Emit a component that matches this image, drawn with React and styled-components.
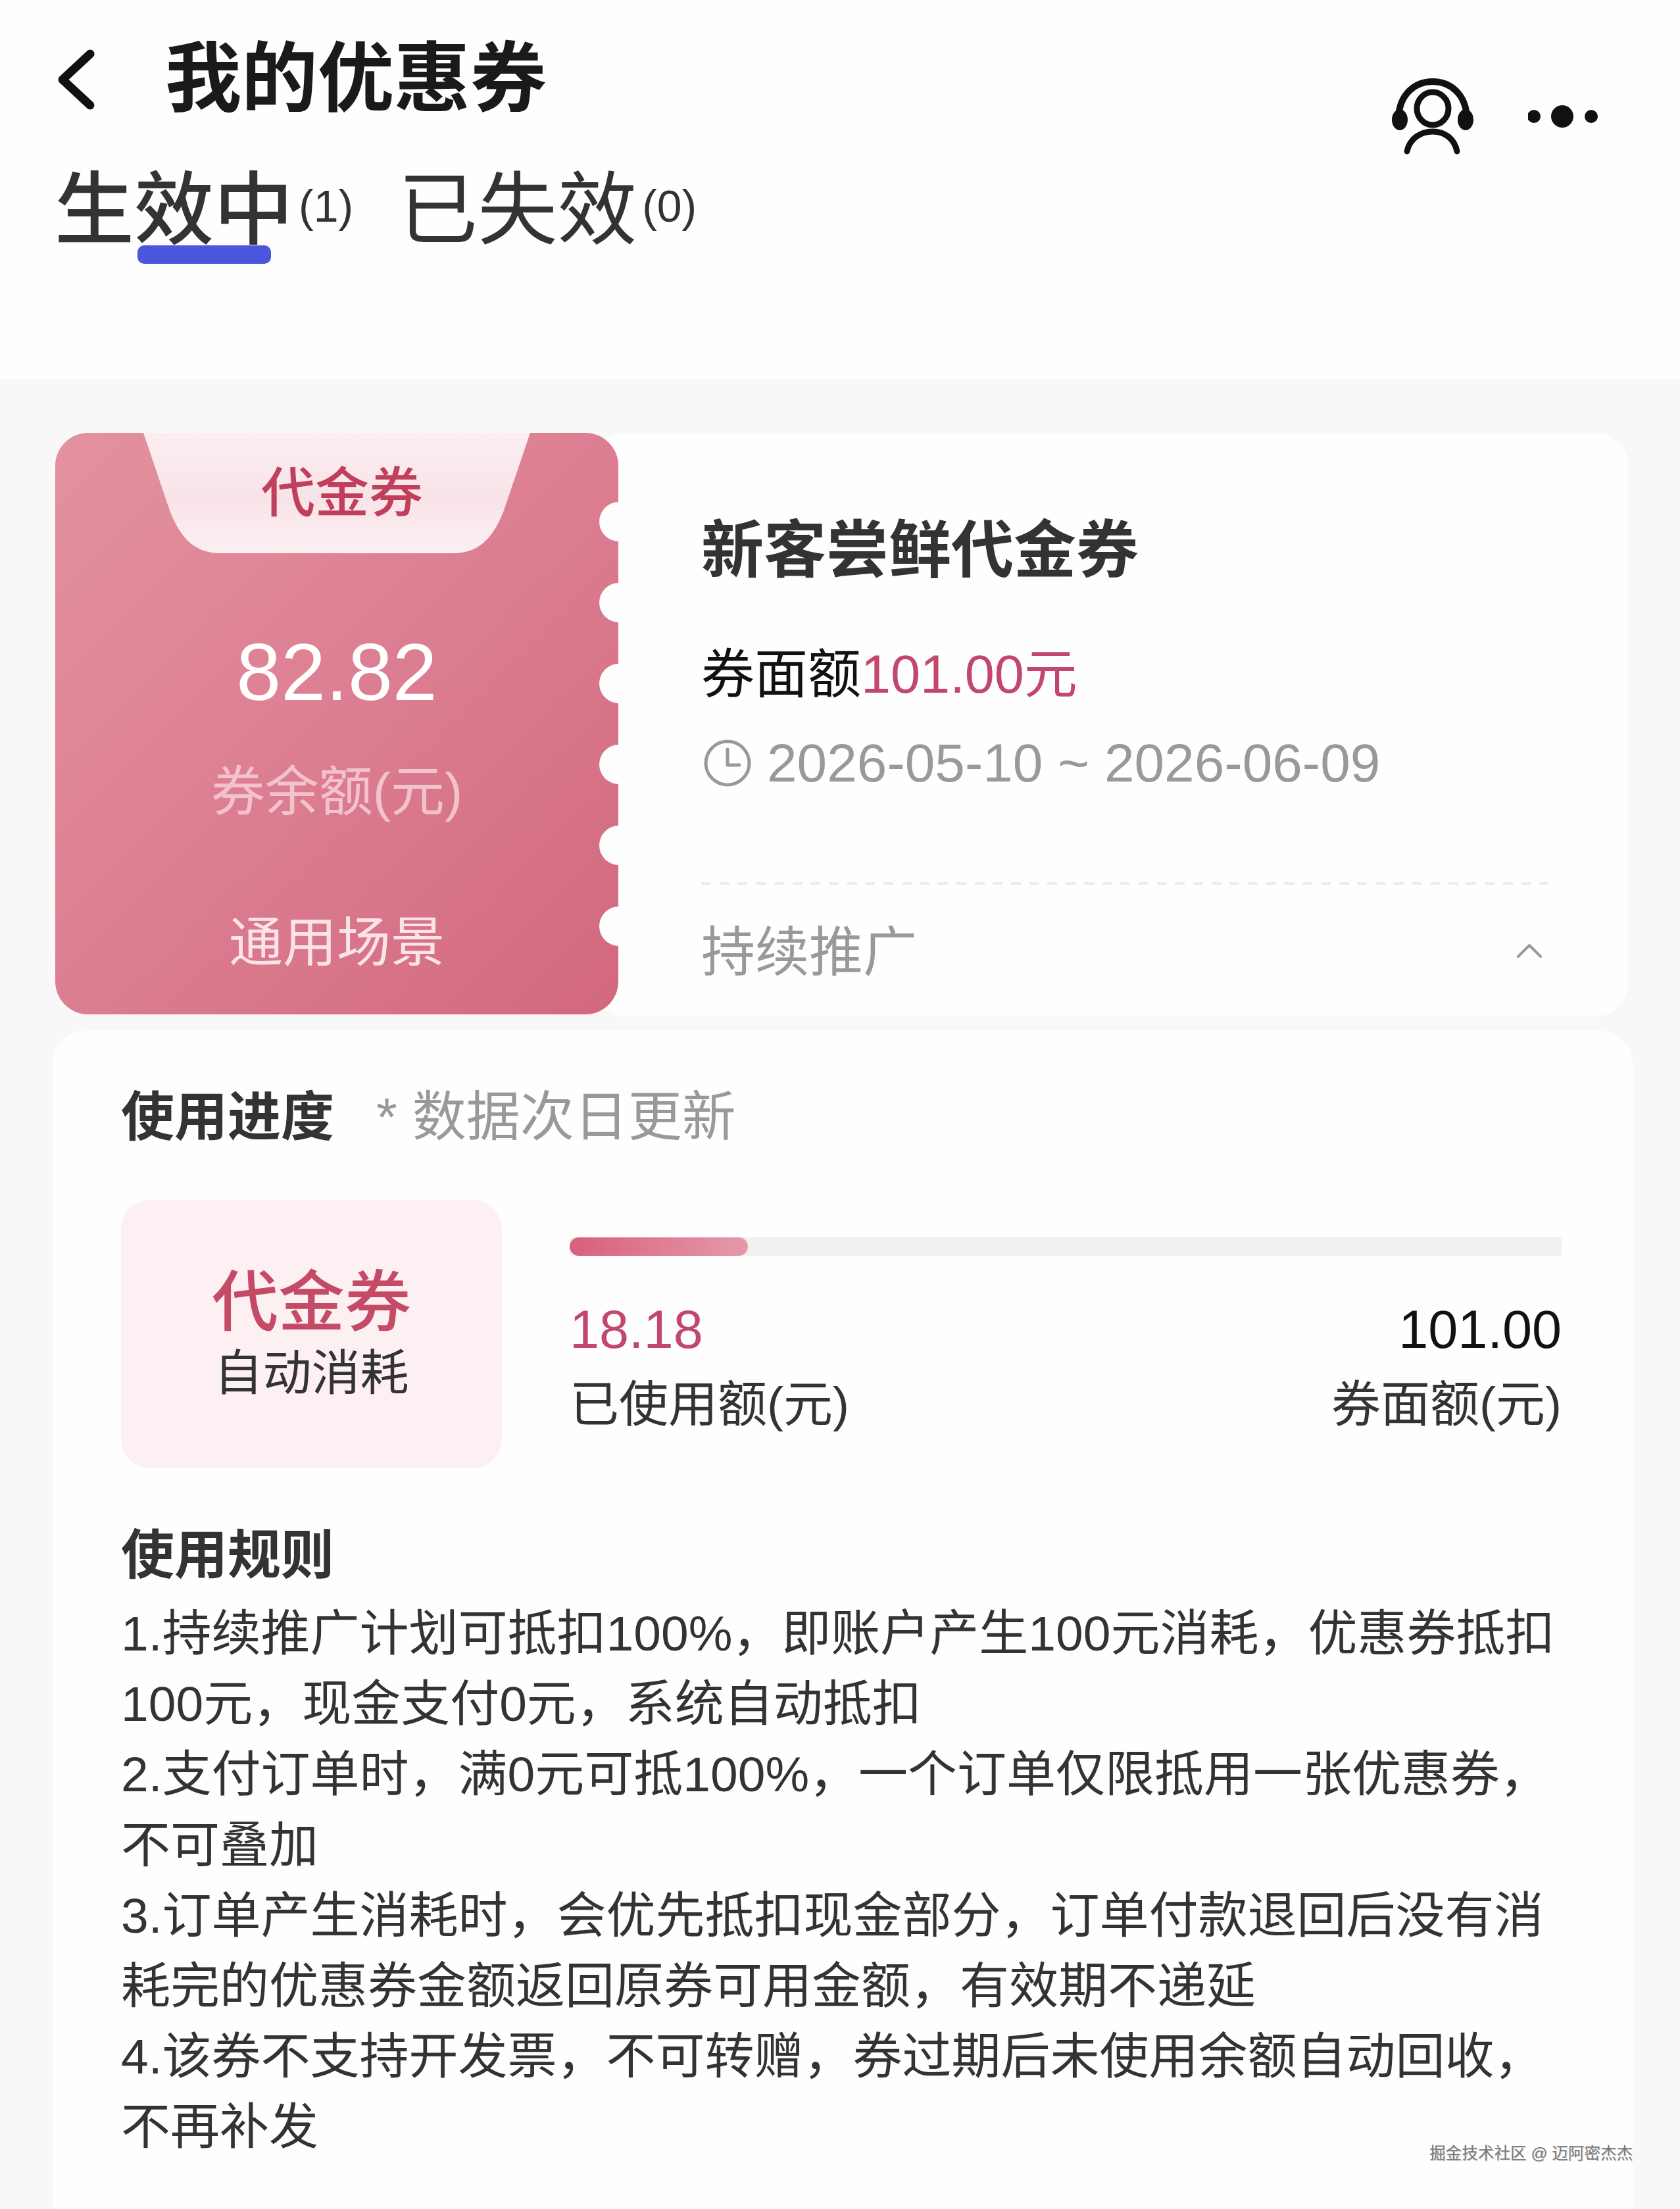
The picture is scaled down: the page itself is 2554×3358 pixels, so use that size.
import React from "react";
import styled, { createGlobalStyle } from "styled-components";

const Global = createGlobalStyle`
  html, body { margin: 0; padding: 0; background: #f8f8f8; }
  body { font-family: "Liberation Sans", "Noto Sans CJK SC", sans-serif; color: #333; }
`;

const Page = styled.div`
  position: relative;
  width: 2554px;
  height: 3358px;
  overflow: hidden;
  background: #f8f8f8;
`;

const TopBar = styled.header`
  height: 576px;
  box-sizing: border-box;
  background: #fefefe;
  padding: 55px 125px 0 83px;
`;

const NavRow = styled.div`
  display: flex;
  align-items: flex-start;
  height: 204px;
`;

const BackButton = styled.svg`
  width: 56px;
  height: 92px;
  margin: 20px 0 0 5px;
  flex: none;
`;

const PageTitle = styled.h1`
  margin: 7px 0 0 107px;
  font-size: 116px;
  line-height: 116px;
  font-weight: 700;
  color: #1a1a1a;
  flex: 1;
`;

const NavActions = styled.div`
  display: flex;
  align-items: center;
  gap: 83px;
  margin-top: 63px;
`;

const Tabs = styled.nav`
  display: flex;
  align-items: flex-start;
  gap: 68px;
`;

const Tab = styled.div`
  position: relative;
  display: flex;
  align-items: flex-start;
  font-size: 121px;
  line-height: 120px;
  font-weight: ${(p) => (p.$active ? 500 : 400)};
  color: #333;
`;

const TabCount = styled.span`
  font-size: 68px;
  line-height: 68px;
  font-weight: 400;
  margin: 20px 0 0 8px;
`;

const TabMark = styled.span`
  position: absolute;
  left: 126px;
  top: 114px;
  width: 203px;
  height: 28px;
  border-radius: 10px;
  background: #4a56dc;
`;

const CouponRow = styled.section`
  display: flex;
  margin: 82px 79px 0 84px;
  height: 887px;
`;

const Stub = styled.div`
  position: relative;
  z-index: 1;
  flex: none;
  width: 856px;
  height: 884px;
  border-radius: 50px;
  background: linear-gradient(135deg, #e3929f 0%, #dd8093 45%, #d2687e 100%);
  display: flex;
  flex-direction: column;
  align-items: center;
`;

const StubTab = styled.div`
  width: 588px;
  height: 183px;
  flex: none;
  display: flex;
  align-items: center;
  justify-content: center;
  padding-left: 16px;
  box-sizing: border-box;
  background: linear-gradient(180deg, #fbeef1 0%, #f9e3e8 55%, #fbf0f3 100%);
  clip-path: path("M0 0 L40 118 C58 165 82 183 118 183 L470 183 C506 183 530 165 548 118 L588 0 Z");
  font-size: 82px;
  line-height: 82px;
  font-weight: 500;
  color: #c0405c;
`;

const StubAmount = styled.div`
  margin-top: 121px;
  font-size: 122px;
  line-height: 120px;
  color: #fff;
`;

const StubLabel = styled.div`
  margin-top: ${(p) => p.$gap}px;
  font-size: 82px;
  line-height: 80px;
  color: ${(p) => p.$color};
`;

const Notches = styled.div`
  position: absolute;
  left: 827px;
  top: 105px;
  display: flex;
  flex-direction: column;
  gap: 63px;
`;

const Notch = styled.span`
  display: block;
  width: 60px;
  height: 60px;
  border-radius: 50%;
  background: #fdfdfd;
`;

const CouponBody = styled.div`
  flex: 1;
  margin-left: -40px;
  box-sizing: border-box;
  padding: 132px 121px 0 166px;
  border-radius: 50px;
  background: #fefefe;
`;

const CouponName = styled.h2`
  margin: 0;
  font-size: 95px;
  line-height: 95px;
  font-weight: 700;
  color: #333;
`;

const FaceValue = styled.div`
  margin-top: 100px;
  font-size: 81px;
  line-height: 80px;
  color: #111;
`;

const Accent = styled.span`
  color: #c2476b;
`;

const DateRow = styled.div`
  display: flex;
  align-items: center;
  gap: 22px;
  margin-top: 55px;
  font-size: 82px;
  line-height: 80px;
  color: #999;
  white-space: nowrap;
`;

const ClockIcon = styled.svg`
  width: 78px;
  height: 78px;
  flex: none;
`;

const Dashed = styled.div`
  margin-top: 141px;
  height: 4px;
  background: repeating-linear-gradient(90deg, #ededed 0 15px, transparent 15px 27.7px);
`;

const ScopeRow = styled.div`
  display: flex;
  align-items: center;
  justify-content: space-between;
  margin-top: 63px;
  font-size: 82px;
  line-height: 80px;
  color: #999;
`;

const Caret = styled.svg`
  width: 40px;
  height: 24px;
  margin: 0 9px 6px 0;
`;

const Panel = styled.section`
  margin: 22px 72px 0 80px;
  padding: 91px 108px 0 104px;
  height: 1900px;
  box-sizing: border-box;
  border-radius: 50px;
  background: #fefefe;
`;

const PanelHead = styled.div`
  display: flex;
  align-items: center;
  font-size: 81px;
  line-height: 80px;
`;

const PanelTitle = styled.h3`
  margin: 0;
  font-size: inherit;
  line-height: inherit;
  font-weight: 700;
  color: #333;
`;

const PanelNote = styled.span`
  margin-left: 64px;
  font-size: 82px;
  color: #999;
`;

const Progress = styled.div`
  display: flex;
  margin-top: 86px;
`;

const KindTile = styled.div`
  flex: none;
  width: 579px;
  height: 408px;
  box-sizing: border-box;
  padding-top: 106px;
  border-radius: 44px;
  background: #fcf0f2;
  display: flex;
  flex-direction: column;
  align-items: center;
`;

const KindName = styled.div`
  font-size: 101px;
  line-height: 100px;
  font-weight: 500;
  color: #c54a66;
`;

const KindSub = styled.div`
  margin-top: 22px;
  font-size: 74px;
  line-height: 72px;
  color: #333;
`;

const Usage = styled.div`
  flex: 1;
  margin-left: 103px;
  padding-top: 57px;
`;

const Track = styled.div`
  height: 28px;
  background: #f0f0f0;
  border-radius: 4px;
  overflow: hidden;
`;

const Fill = styled.div`
  height: 100%;
  border-radius: 14px;
  background: linear-gradient(90deg, #d8607b, #e599ab);
`;

const UsageFigures = styled.div`
  display: flex;
  justify-content: space-between;
  margin-top: 72px;
`;

const Figure = styled.div`
  text-align: ${(p) => (p.$right ? "right" : "left")};
`;

const FigureValue = styled.div`
  font-size: 81px;
  line-height: 80px;
  color: ${(p) => p.$color};
`;

const FigureLabel = styled.div`
  margin-top: 37px;
  font-size: 75px;
  line-height: 74px;
  color: #333;
`;

const RulesTitle = styled.h3`
  margin: 92px 0 0;
  font-size: 81px;
  line-height: 80px;
  font-weight: 700;
  color: #333;
`;

const Rules = styled.div`
  margin-top: 26px;
  font-size: 75px;
  line-height: 107.2px;
  color: #333;
`;

const RuleLine = styled.div`
  width: fit-content;
  white-space: nowrap;
`;

const Watermark = styled.div`
  position: absolute;
  left: 2173px;
  top: 3260px;
  font-size: 24.6px;
  line-height: 28px;
  color: #7a7a7a;
  text-shadow: 1px 1px 0 #d0d0d0;
  white-space: nowrap;
`;

const ruleLines = [
  "1.持续推广计划可抵扣100%，即账户产生100元消耗，优惠券抵扣",
  "100元，现金支付0元，系统自动抵扣",
  "2.支付订单时，满0元可抵100%，一个订单仅限抵用一张优惠券，",
  "不可叠加",
  "3.订单产生消耗时，会优先抵扣现金部分，订单付款退回后没有消",
  "耗完的优惠券金额返回原券可用金额，有效期不递延",
  "4.该券不支持开发票，不可转赠，券过期后未使用余额自动回收，",
  "不再补发",
];

export default function App() {
  return (
    <Page>
      <Global />
      <TopBar>
        <NavRow>
          <BackButton viewBox="0 0 56 92" aria-label="返回">
            <polyline points="49,7 7,46 49,85" fill="none" stroke="#111" strokeWidth="13" strokeLinecap="round" strokeLinejoin="round" />
          </BackButton>
          <PageTitle>我的优惠券</PageTitle>
          <NavActions>
            <svg width="124" height="118" viewBox="0 0 124 118" fill="none" stroke="#111" strokeLinecap="round">
              <path d="M10 60C12 25 35 6 62 6C89 6 112 25 114 60" strokeWidth="10" />
              <ellipse cx="12" cy="64" rx="12" ry="16" fill="#111" stroke="none" />
              <ellipse cx="112" cy="64" rx="12" ry="16" fill="#111" stroke="none" />
              <ellipse cx="62" cy="47" rx="24" ry="25" strokeWidth="9" />
              <path d="M23 112C27 93 43 82 62 82C81 82 95 93 99 112" strokeWidth="9" />
            </svg>
            <svg width="106" height="36" viewBox="0 0 106 36" fill="#111">
              <circle cx="9" cy="18" r="10" />
              <circle cx="52" cy="18" r="17" />
              <circle cx="96" cy="18" r="10" />
            </svg>
          </NavActions>
        </NavRow>
        <Tabs>
          <Tab $active>
            生效中<TabCount>(1)</TabCount>
            <TabMark />
          </Tab>
          <Tab>
            已失效<TabCount>(0)</TabCount>
          </Tab>
        </Tabs>
      </TopBar>

      <CouponRow>
        <Stub>
          <StubTab>代金券</StubTab>
          <StubAmount>82.82</StubAmount>
          <StubLabel $gap={82} $color="#f3c3cc">券余额(元)</StubLabel>
          <StubLabel $gap={149} $color="#fbe3e7">通用场景</StubLabel>
          <Notches>
            {[0, 1, 2, 3, 4, 5].map((n) => (
              <Notch key={n} />
            ))}
          </Notches>
        </Stub>
        <CouponBody>
          <CouponName>新客尝鲜代金券</CouponName>
          <FaceValue>
            券面额<Accent>101.00元</Accent>
          </FaceValue>
          <DateRow>
            <ClockIcon viewBox="0 0 78 78" fill="none" stroke="#999" strokeWidth="5" strokeLinecap="round" strokeLinejoin="round">
              <circle cx="40" cy="39" r="33" />
              <polyline points="40,18 40,42 58,42" />
            </ClockIcon>
            2026-05-10 ~ 2026-06-09
          </DateRow>
          <Dashed />
          <ScopeRow>
            持续推广
            <Caret viewBox="0 0 40 24" fill="none" stroke="#999" strokeWidth="4" strokeLinecap="round" strokeLinejoin="round">
              <polyline points="3,21 20,4 37,21" />
            </Caret>
          </ScopeRow>
        </CouponBody>
      </CouponRow>

      <Panel>
        <PanelHead>
          <PanelTitle>使用进度</PanelTitle>
          <PanelNote>* 数据次日更新</PanelNote>
        </PanelHead>
        <Progress>
          <KindTile>
            <KindName>代金券</KindName>
            <KindSub>自动消耗</KindSub>
          </KindTile>
          <Usage>
            <Track>
              <Fill style={{ width: `${(18.18 / 101) * 100}%` }} />
            </Track>
            <UsageFigures>
              <Figure>
                <FigureValue $color="#c2476b">18.18</FigureValue>
                <FigureLabel>已使用额(元)</FigureLabel>
              </Figure>
              <Figure $right>
                <FigureValue $color="#111">101.00</FigureValue>
                <FigureLabel>券面额(元)</FigureLabel>
              </Figure>
            </UsageFigures>
          </Usage>
        </Progress>
        <RulesTitle>使用规则</RulesTitle>
        <Rules>
          {ruleLines.map((line) => (
            <RuleLine key={line}>{line}</RuleLine>
          ))}
        </Rules>
      </Panel>

      <Watermark>掘金技术社区 @ 迈阿密杰杰</Watermark>
    </Page>
  );
}
